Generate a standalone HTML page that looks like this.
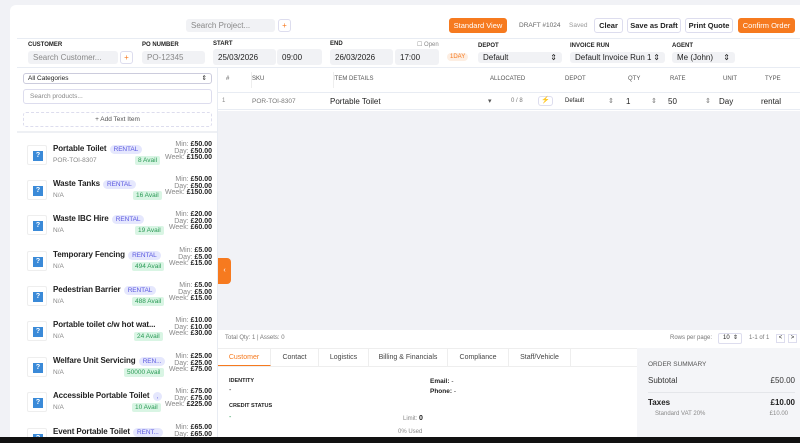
<!DOCTYPE html>
<html><head><meta charset="utf-8"><style>
*{box-sizing:border-box;margin:0;padding:0}
html,body{width:800px;height:443px;overflow:hidden}
body{background:#f1f2f6;font-family:"Liberation Sans",sans-serif;color:#222;position:relative;font-size:8px}
.a{position:absolute}
.card{position:absolute;left:10px;top:5px;right:0;bottom:0;background:#fff;border-radius:6px 0 0 0}
.inp{position:absolute;background:#f1f2f5;border-radius:3px;font-size:8px;color:#888;padding-left:5px;display:flex;align-items:center}
.btn{position:absolute;border:1px solid #dde;border-radius:3px;font-size:7.5px;display:flex;align-items:center;justify-content:center;background:#fff;font-weight:bold;color:#222}
.or{background:#f67a1f;color:#fff;border-color:#f67a1f;font-weight:normal}
.lbl{position:absolute;font-size:6px;font-weight:bold;color:#222}
.plus{position:absolute;width:13px;height:13px;border:1px solid #dde;border-radius:3px;color:#f67a1f;font-size:8px;display:flex;align-items:center;justify-content:center}
.th{position:absolute;top:76px;font-size:6px;color:#555}
.it{position:absolute;left:27px;width:190px;height:30px}
.img{position:absolute;left:0;top:0;width:20px;height:20px;border:1px solid #eee;border-radius:2px}
.img:after{content:"?";position:absolute;left:5px;top:5px;width:10px;height:10px;background:#3a8ad8;color:#fff;font-size:7px;font-weight:bold;text-align:center;line-height:10px}
.nm{position:absolute;left:26px;top:-1px;font-size:8px;font-weight:bold;color:#222;white-space:nowrap;letter-spacing:-0.1px}
.tag{display:inline-block;background:#e5e7fd;color:#5a58e0;font-size:6.5px;font-weight:normal;border-radius:6px;padding:1px 4px;margin-left:1px}
.sk{position:absolute;left:26px;top:12px;font-size:6.5px;color:#888}
.av{position:absolute;top:11px;background:#d9f5e4;color:#2a9a55;font-size:6.5px;padding:1px 3px;border-radius:2px}
.pr{position:absolute;right:5px;top:-3px;font-size:7px;text-align:right;line-height:6.5px;color:#888}
.pr b{color:#222}
.tab{position:absolute;top:349px;height:17px;font-size:7px;color:#444;display:flex;align-items:center;justify-content:center;border-right:1px solid #eee}
</style></head><body>
<div class="card"></div>
<div class="inp" style="left:186px;top:19px;width:89px;height:13px">Search Project...</div>
<div class="plus" style="left:278px;top:19px">+</div>
<div class="btn or" style="left:449px;top:18px;width:58px;height:15px">Standard View</div>
<div class="a" style="left:519px;top:22px;font-size:6.5px;color:#666">DRAFT #1024</div>
<div class="a" style="left:569px;top:22px;font-size:6.5px;color:#999">Saved</div>
<div class="btn" style="left:594px;top:18px;width:29px;height:15px">Clear</div>
<div class="btn" style="left:627px;top:18px;width:54px;height:15px">Save as Draft</div>
<div class="btn" style="left:685px;top:18px;width:48px;height:15px">Print Quote</div>
<div class="btn or" style="left:738px;top:18px;width:57px;height:15px">Confirm Order</div>
<div class="a" style="left:17px;top:38px;right:0;height:1px;background:#e8ecf3"></div>
<div class="lbl" style="left:28px;top:42px">CUSTOMER</div>
<div class="inp" style="left:28px;top:51px;width:90px;height:13px">Search Customer...</div>
<div class="plus" style="left:120px;top:51px">+</div>
<div class="lbl" style="left:142px;top:42px">PO NUMBER</div>
<div class="inp" style="left:142px;top:51px;width:63px;height:13px">PO-12345</div>
<div class="lbl" style="left:213px;top:41px">START</div>
<div class="inp" style="left:213px;top:49px;width:63px;height:16px;color:#222">25/03/2026</div>
<div class="inp" style="left:277px;top:49px;width:45px;height:16px;color:#222">09:00</div>
<div class="lbl" style="left:330px;top:41px">END</div>
<div class="inp" style="left:330px;top:49px;width:63px;height:16px;color:#222">26/03/2026</div>
<div class="inp" style="left:395px;top:49px;width:44px;height:16px;color:#222">17:00</div>
<div class="a" style="left:417px;top:41px;font-size:6px;color:#888">☐ Open</div>
<div class="a" style="left:447px;top:53px;font-size:6px;color:#f67a1f;background:#fdeee2;padding:1px 3px;border-radius:5px">1DAY</div>
<div class="lbl" style="left:478px;top:43px">DEPOT</div>
<div class="inp" style="left:478px;top:52px;width:84px;height:11px;color:#222">Default<span style="position:absolute;right:5px">⇕</span></div>
<div class="lbl" style="left:570px;top:43px">INVOICE RUN</div>
<div class="inp" style="left:570px;top:52px;width:95px;height:11px;color:#222">Default Invoice Run 1<span style="position:absolute;right:5px">⇕</span></div>
<div class="lbl" style="left:672px;top:43px">AGENT</div>
<div class="inp" style="left:672px;top:52px;width:63px;height:11px;color:#222">Me (John)<span style="position:absolute;right:5px">⇕</span></div>
<div class="a" style="left:17px;top:67px;right:0;height:1px;background:#e8ecf3"></div>
<div class="a" style="left:217px;top:68px;width:1px;bottom:0;background:#e8ecf3"></div>
<div class="a" style="left:23px;top:73px;width:189px;height:11px;border:1px solid #ccd;border-radius:3px;font-size:6.5px;padding-left:4px;line-height:9px">All Categories<span style="position:absolute;right:4px">⇕</span></div>
<div class="a" style="left:23px;top:89px;width:189px;height:15px;border:1px solid #dde;border-radius:3px;font-size:6.5px;color:#888;padding-left:6px;line-height:13px">Search products...</div>
<div class="a" style="left:23px;top:112px;width:189px;height:15px;border:1px dashed #dde;border-radius:3px;font-size:6.5px;color:#555;text-align:center;line-height:13px">+ Add Text Item</div>
<div class="a" style="left:17px;top:131px;width:200px;height:2px;background:#eef0f4"></div>
<div class="it" style="top:145px"><div class="img"></div><div class="nm">Portable Toilet <span class="tag">RENTAL</span></div><div class="sk">POR-TOI-8307</div><div class="av" style="left:108px">8 Avail</div><div class="pr">Min: <b>£50.00</b><br>Day: <b>£50.00</b><br>Week: <b>£150.00</b></div></div>
<div class="it" style="top:180px"><div class="img"></div><div class="nm">Waste Tanks <span class="tag">RENTAL</span></div><div class="sk">N/A</div><div class="av" style="left:106px">16 Avail</div><div class="pr">Min: <b>£50.00</b><br>Day: <b>£50.00</b><br>Week: <b>£150.00</b></div></div>
<div class="it" style="top:215px"><div class="img"></div><div class="nm">Waste IBC Hire <span class="tag">RENTAL</span></div><div class="sk">N/A</div><div class="av" style="left:108px">19 Avail</div><div class="pr">Min: <b>£20.00</b><br>Day: <b>£20.00</b><br>Week: <b>£60.00</b></div></div>
<div class="it" style="top:251px"><div class="img"></div><div class="nm">Temporary Fencing <span class="tag">RENTAL</span></div><div class="sk">N/A</div><div class="av" style="left:105px">494 Avail</div><div class="pr">Min: <b>£5.00</b><br>Day: <b>£5.00</b><br>Week: <b>£15.00</b></div></div>
<div class="it" style="top:286px"><div class="img"></div><div class="nm">Pedestrian Barrier <span class="tag">RENTAL</span></div><div class="sk">N/A</div><div class="av" style="left:105px">488 Avail</div><div class="pr">Min: <b>£5.00</b><br>Day: <b>£5.00</b><br>Week: <b>£15.00</b></div></div>
<div class="it" style="top:321px"><div class="img"></div><div class="nm">Portable toilet c/w hot wat...</div><div class="sk">N/A</div><div class="av" style="left:107px">24 Avail</div><div class="pr">Min: <b>£10.00</b><br>Day: <b>£10.00</b><br>Week: <b>£30.00</b></div></div>
<div class="it" style="top:357px"><div class="img"></div><div class="nm">Welfare Unit Servicing <span class="tag">REN...</span></div><div class="sk">N/A</div><div class="av" style="left:97px">50000 Avail</div><div class="pr">Min: <b>£25.00</b><br>Day: <b>£25.00</b><br>Week: <b>£75.00</b></div></div>
<div class="it" style="top:392px"><div class="img"></div><div class="nm">Accessible Portable Toilet <span class="tag">,</span></div><div class="sk">N/A</div><div class="av" style="left:105px">10 Avail</div><div class="pr">Min: <b>£75.00</b><br>Day: <b>£75.00</b><br>Week: <b>£225.00</b></div></div>
<div class="it" style="top:428px"><div class="img"></div><div class="nm">Event Portable Toilet <span class="tag">RENT...</span></div><div class="pr">Min: <b>£65.00</b><br>Day: <b>£65.00</b></div></div>
<div class="a" style="left:218px;top:92px;right:0;height:18px;background:#fff;border-top:1px solid #e8ecf3;border-bottom:1px solid #e8ecf3"></div>
<div class="a" style="left:218px;top:111px;right:0;height:219px;background:#f1f2f6"></div>
<div class="th" style="left:226px">#</div><div class="th" style="left:252px">SKU</div><div class="th" style="left:333px">ITEM DETAILS</div><div class="th" style="left:490px">ALLOCATED</div><div class="th" style="left:565px">DEPOT</div><div class="th" style="left:628px">QTY</div><div class="th" style="left:670px">RATE</div><div class="th" style="left:723px">UNIT</div><div class="th" style="left:765px">TYPE</div>
<div class="a" style="left:251px;top:72px;width:1px;height:16px;background:#eee"></div>
<div class="a" style="left:333px;top:72px;width:1px;height:16px;background:#eee"></div>
<div class="a" style="left:222px;top:98px;font-size:6px;color:#888">1</div>
<div class="a" style="left:252px;top:98px;font-size:6.5px;color:#777">POR-TOI-8307</div>
<div class="a" style="left:330px;top:97px;font-size:8px">Portable Toilet</div>
<div class="a" style="left:488px;top:97px;font-size:7px;color:#555">▾</div>
<div class="a" style="left:511px;top:98px;font-size:6px;color:#777">0 / 8</div>
<div class="a" style="left:538px;top:96px;width:15px;height:10px;border:1px solid #dde;border-radius:3px;color:#f67a1f;font-size:7px;text-align:center;line-height:8px">⚡</div>
<div class="a" style="left:565px;top:98px;font-size:6px">Default</div>
<div class="a" style="left:608px;top:97px;font-size:7px;color:#777">⇕</div>
<div class="a" style="left:626px;top:97px;font-size:8px">1</div>
<div class="a" style="left:651px;top:97px;font-size:7px;color:#777">⇕</div>
<div class="a" style="left:668px;top:97px;font-size:8px">50</div>
<div class="a" style="left:705px;top:97px;font-size:7px;color:#777">⇕</div>
<div class="a" style="left:719px;top:97px;font-size:8px">Day</div>
<div class="a" style="left:761px;top:97px;font-size:8px">rental</div>
<div class="a" style="left:218px;top:258px;width:13px;height:26px;background:#f67a1f;border-radius:0 4px 4px 0;color:#fff;font-size:7px;text-align:center;line-height:26px">‹</div>
<div class="a" style="left:225px;top:335px;font-size:6px;color:#777">Total Qty: 1 | Assets: 0</div>
<div class="a" style="left:670px;top:335px;font-size:6px;color:#777">Rows per page:</div>
<div class="a" style="left:718px;top:333px;width:24px;height:11px;border:1px solid #dde;border-radius:2px;font-size:6px;padding-left:4px;line-height:9px">10 <span style="float:right;margin-right:3px">⇕</span></div>
<div class="a" style="left:749px;top:335px;font-size:6px;color:#777">1-1 of 1</div>
<div class="a" style="left:776px;top:334px;width:9px;height:9px;border:1px solid #dde;font-size:6px;text-align:center;line-height:7px">&lt;</div>
<div class="a" style="left:788px;top:334px;width:9px;height:9px;border:1px solid #dde;font-size:6px;text-align:center;line-height:7px">&gt;</div>
<div class="a" style="left:218px;top:348px;width:419px;height:1px;background:#eee"></div>
<div class="tab" style="left:218px;width:53px;color:#f67a1f;border-bottom:1.5px solid #f67a1f">Customer</div>
<div class="tab" style="left:271px;width:48px">Contact</div>
<div class="tab" style="left:319px;width:50px">Logistics</div>
<div class="tab" style="left:369px;width:79px">Billing &amp; Financials</div>
<div class="tab" style="left:448px;width:61px">Compliance</div>
<div class="tab" style="left:509px;width:62px">Staff/Vehicle</div>
<div class="a" style="left:218px;top:366px;width:419px;height:1px;background:#eee"></div>
<div class="a" style="left:229px;top:378px;font-size:5.5px;font-weight:bold">IDENTITY</div>
<div class="a" style="left:229px;top:387px;font-size:7px">-</div>
<div class="a" style="left:229px;top:403px;font-size:5.5px;font-weight:bold">CREDIT STATUS</div>
<div class="a" style="left:229px;top:414px;font-size:7px;color:#2a9a55">-</div>
<div class="a" style="left:430px;top:378px;font-size:6.5px;font-weight:bold">Email: <span style="font-weight:normal">-</span></div>
<div class="a" style="left:430px;top:388px;font-size:6.5px;font-weight:bold">Phone: <span style="font-weight:normal">-</span></div>
<div class="a" style="left:403px;top:415px;font-size:6px;color:#888">Limit: <b style="color:#222;font-size:7px">0</b></div>
<div class="a" style="left:398px;top:429px;font-size:6px;color:#888">0% Used</div>
<div class="a" style="left:637px;top:348px;right:0;height:95px;background:#f4f5f8"></div>
<div class="a" style="left:648px;top:361px;font-size:6.5px;color:#555">ORDER SUMMARY</div>
<div class="a" style="left:648px;top:376px;font-size:8px;color:#333">Subtotal</div>
<div class="a" style="right:5px;top:376px;font-size:8px;color:#333">£50.00</div>
<div class="a" style="left:648px;top:392px;width:147px;height:1px;background:#e4e6ea"></div>
<div class="a" style="left:648px;top:398px;font-size:8px;font-weight:bold">Taxes</div>
<div class="a" style="right:5px;top:398px;font-size:8px;font-weight:bold">£10.00</div>
<div class="a" style="left:655px;top:411px;font-size:6px;color:#888">Standard VAT 20%</div>
<div class="a" style="right:12px;top:411px;font-size:6px;color:#888">£10.00</div>
<div class="a" style="left:0;top:437px;width:800px;height:6px;background:#111"></div>
</body></html>
